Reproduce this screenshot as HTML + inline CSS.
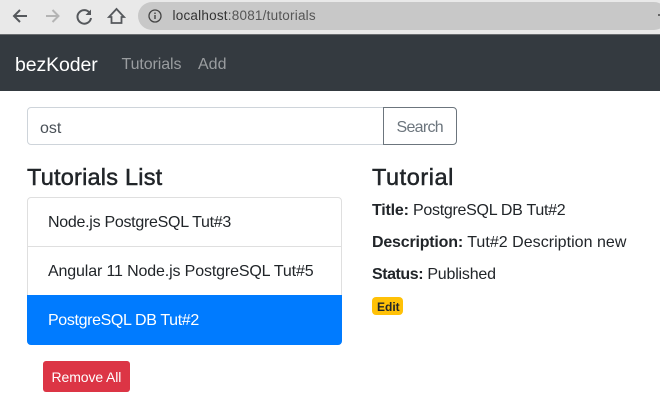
<!DOCTYPE html>
<html><head><meta charset="utf-8"><style>
html,body{margin:0;padding:0;background:#fff}
body{width:660px;height:420px;position:relative;overflow:hidden;font-family:"Liberation Sans",sans-serif;color:#212529}
.a{position:absolute;display:block;box-sizing:border-box}
.t{position:absolute;white-space:nowrap;line-height:20px;font-size:16px}
b{font-weight:700}
</style></head><body>
<div class="a" style="left:0;top:0;width:660px;height:34px;background:#e9e9e9"></div>
<div class="a" style="left:0;top:34px;width:660px;height:1px;background:#6a6d70"></div>
<div class="a" style="left:138px;top:2px;width:530px;height:28px;border-radius:14px;background:#c8c8c8"></div>
<div class="a" style="left:658px;top:14px;width:2px;height:2px;background:#666"></div>
<svg class="a" style="left:0;top:0" width="170" height="34" fill="none" stroke-width="2">
<path d="M27 16H14.5M20 10l-6 6 6 6" stroke="#55585c"/>
<path d="M46 16h12.5M52.5 10l6 6-6 6" stroke="#b4b4b4"/>
<path d="M89.5 12.5A6.8 6.8 0 1 0 91 18" stroke="#55585c"/>
<path d="M91 9.5v5.5h-5.500z" fill="#55585c"/>
<path d="M109 17l7.500-8 7.500 8h-2.500v6h-10v-6z" stroke="#55585c" stroke-width="1.800" stroke-linejoin="miter"/>
<circle cx="155" cy="16" r="6" stroke="#444" stroke-width="1.300"/>
<path d="M155 15v4M155 12.500v1.500" stroke="#444" stroke-width="1.400"/>
</svg>
<div class="t" style="left:172.500px;top:6px;font-size:13.500px;color:#333;letter-spacing:.22px">localhost<span style="color:#555">:8081/tutorials</span></div>

<div class="a" style="left:0;top:35px;width:660px;height:56px;background:#343a40"></div>
<div class="t" style="left:15px;top:55px;font-size:19.500px;color:#fff;letter-spacing:-.1px">bezKoder</div>
<div class="t" style="left:121.500px;top:55px;color:#9a9da0;letter-spacing:-.1px">Tutorials</div>
<div class="t" style="left:198px;top:55px;color:#9a9da0">Add</div>

<div class="a" style="left:27px;top:107px;width:357px;height:38px;border:1px solid #ced4da;border-radius:4px 0 0 4px"></div>
<div class="t" style="left:40px;top:119px;color:#495057">ost</div>
<div class="a" style="left:383px;top:107px;width:74px;height:38px;border:1px solid #6c757d;border-radius:0 4px 4px 0"></div>
<div class="t" style="left:396.500px;top:118px;color:#6c757d;letter-spacing:-.7px">Search</div>

<div class="t" style="left:27px;top:167px;font-size:23.500px;font-weight:500;line-height:20px;letter-spacing:.22px;-webkit-text-stroke:.5px #212529">Tutorials List</div>
<div class="t" style="left:372px;top:167px;font-size:23.500px;line-height:20px;-webkit-text-stroke:.5px #212529;letter-spacing:.55px">Tutorial</div>

<div class="a" style="left:27px;top:197px;width:315px;height:148px;border:1px solid #dfdfdf;border-radius:4px"></div>
<div class="a" style="left:28px;top:246px;width:313px;height:1px;background:#dfdfdf"></div>
<div class="a" style="left:27px;top:295px;width:315px;height:50px;background:#007bff;border-radius:0 0 4px 4px"></div>
<div class="t" style="left:48px;top:213px;letter-spacing:-.28px">Node.js PostgreSQL Tut#3</div>
<div class="t" style="left:48px;top:262px;letter-spacing:-.14px">Angular 11 Node.js PostgreSQL Tut#5</div>
<div class="t" style="left:48px;top:311px;color:#fff;letter-spacing:-.36px">PostgreSQL DB Tut#2</div>

<div class="a" style="left:43px;top:361px;width:87px;height:31px;background:#dc3545;border-radius:3px"></div>
<div class="t" style="left:51.500px;top:367px;font-size:14px;color:#fff;letter-spacing:-.1px">Remove All</div>

<div class="t" style="left:372px;top:201px;letter-spacing:-.2px"><b>Title:</b> <span style="letter-spacing:-.28px">PostgreSQL DB Tut#2</span></div>
<div class="t" style="left:372px;top:233px;letter-spacing:-.2px"><b>Description:</b> <span style="letter-spacing:.03px">Tut#2 Description new</span></div>
<div class="t" style="left:372px;top:265px;letter-spacing:-.2px"><b style="letter-spacing:-.45px">Status:</b> Published</div>
<div class="a" style="left:372px;top:297px;width:31px;height:18px;background:#ffc107;border-radius:4px"></div>
<div class="t" style="left:377px;top:298px;height:18px;line-height:19px;font-size:12px;font-weight:700">Edit</div>
</body></html>
